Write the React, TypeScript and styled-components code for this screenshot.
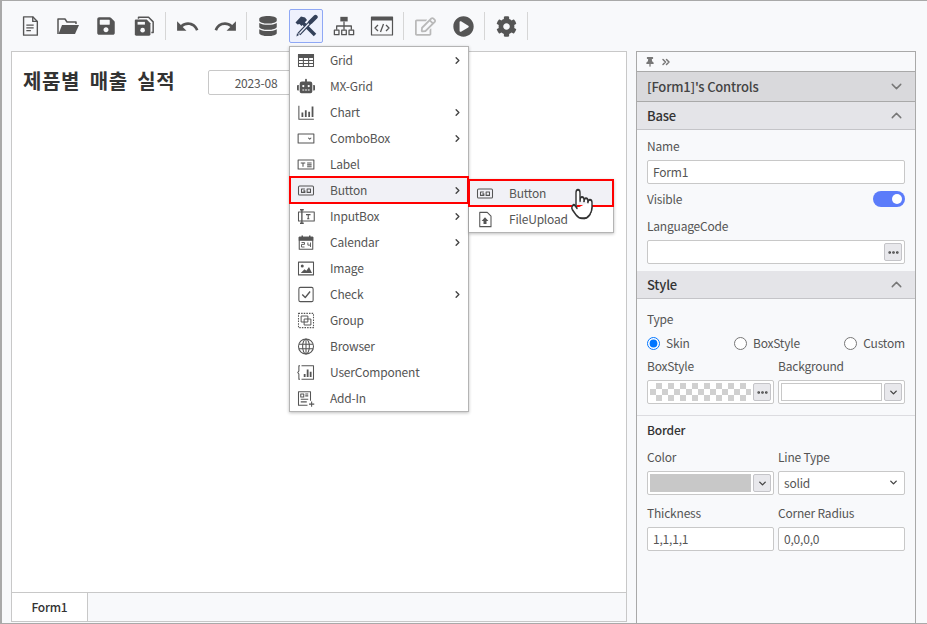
import React from 'react';
import styled, { createGlobalStyle } from 'styled-components';
import { FaCog, FaDatabase, FaPlayCircle, FaRegEdit, FaRobot, FaSave, FaThumbtack } from 'react-icons/fa';
import { MdRedo, MdUndo } from 'react-icons/md';
import { ChevronDown, ChevronRight, ChevronUp, ChevronsRight, Ellipsis, Pointer } from 'lucide-react';

const GlobalStyle = createGlobalStyle`
  html, body {
    margin: 0;
    padding: 0;
    overflow: hidden;
  }
  * {
    box-sizing: border-box;
  }
  body {
    font-family: "Noto Sans CJK KR", "Noto Sans", sans-serif;
    font-size: 12px;
    letter-spacing: -0.2px;
    color: #555;
  }
`;

const Frame = styled.div`
  width: 927px;
  height: 624px;
  display: flex;
  flex-direction: column;
  background: #f8f9fb;
  border-top: 1px solid #a9a9a9;
  border-left: 2px solid #a9a9a9;
  border-bottom: 1px solid #a9a9a9;
`;

const Toolbar = styled.div`
  height: 50px;
  flex: none;
  display: flex;
  align-items: flex-start;
  gap: 4px;
  padding: 8px 0 0 11px;
  position: relative;
  z-index: 2;
`;

const ToolButton = styled.div<{ $active?: boolean; $faded?: boolean }>`
  width: 34px;
  height: 34px;
  display: flex;
  align-items: center;
  justify-content: center;
  position: relative;
  color: ${(props) => (props.$faded ? '#b9b9b9' : '#555')};
  border: 1px solid ${(props) => (props.$active ? '#8fa8f5' : 'transparent')};
  border-radius: 2px;
  background: ${(props) => (props.$active ? '#eef1fd' : 'transparent')};
`;

const ToolSep = styled.div`
  width: 1px;
  height: 28px;
  margin-top: 3px;
  background: #d6d6d6;
`;

const Menu = styled.div`
  position: absolute;
  top: 36px;
  left: -1px;
  width: 180px;
  background: #fff;
  border: 1px solid #b4b4b4;
  box-shadow: 0 1px 3px rgba(0, 0, 0, 0.25);
`;

const MenuItem = styled.div<{ $marked?: boolean }>`
  height: 26px;
  display: flex;
  align-items: center;
  position: relative;
  padding: 0 5px 0 7px;
  background: ${(props) => (props.$marked ? '#f1f1f6' : 'transparent')};
  outline: ${(props) => (props.$marked ? '2px solid #f00' : 'none')};
  outline-offset: -1px;
  z-index: ${(props) => (props.$marked ? 1 : 0)};
`;

const MenuIcon = styled.span`
  width: 18px;
  height: 18px;
  flex: none;
  display: flex;
  align-items: center;
  justify-content: center;
  color: #555;
`;

const MenuLabel = styled.span`
  flex: 1;
  margin-left: 15px;
  line-height: 16px;
`;

const SubMenu = styled.div`
  position: absolute;
  top: 2px;
  left: 100%;
  width: 145px;
  margin-left: 1px;
  background: #fff;
  border: 1px solid #b4b4b4;
  border-left: none;
  box-shadow: 0 1px 3px rgba(0, 0, 0, 0.25);
`;

const HandCursor = styled.span`
  position: absolute;
  left: 101px;
  top: 7px;
  color: #333;
  z-index: 3;
`;

const Main = styled.div`
  flex: 1;
  min-height: 0;
  display: flex;
  gap: 9px;
  padding-left: 9px;
`;

const Stage = styled.div`
  width: 616px;
  margin-bottom: 1px;
  display: flex;
  flex-direction: column;
  border: 1px solid #c8c8c8;
`;

const Canvas = styled.div`
  flex: 1;
  background: #fff;
  padding: 18px 11px;
`;

const TitleRow = styled.div`
  display: flex;
  align-items: center;
  height: 25px;
`;

const Title = styled.h1`
  margin: 0 33px 3px 0;
  width: 152px;
  font-size: 20px;
  font-weight: 700;
  line-height: 24px;
  color: #333;
  letter-spacing: 0.6px;
  word-spacing: 4.5px;
  white-space: nowrap;
`;

const DateBox = styled.div`
  width: 96px;
  height: 25px;
  display: flex;
  align-items: center;
  justify-content: center;
  background: #fff;
  border: 1px solid #c8c8c8;
  border-radius: 2px;
`;

const TabBar = styled.div`
  height: 29px;
  flex: none;
  display: flex;
  border-top: 1px solid #c8c8c8;
`;

const Tab = styled.div`
  width: 76px;
  display: flex;
  align-items: center;
  justify-content: center;
  padding-bottom: 2px;
  background: #fff;
  border-right: 1px solid #c8c8c8;
  color: #333;
  font-weight: 500;
`;

const Panel = styled.aside`
  width: 280px;
  display: flex;
  flex-direction: column;
  border: 1px solid #a9a9a9;
  border-bottom: none;
`;

const PanelTop = styled.div`
  height: 19px;
  flex: none;
  display: flex;
  align-items: center;
  gap: 5px;
  padding-left: 8px;
  color: #777;
`;

const GroupHeader = styled.div`
  height: 31px;
  flex: none;
  display: flex;
  align-items: center;
  justify-content: space-between;
  padding: 0 10px;
  background: #d9d9dc;
  border-top: 1px solid #a9a9a9;
  border-bottom: 1px solid #a9a9a9;
  font-size: 13px;
  font-weight: 500;
  color: #444;
`;

const SectionHeader = styled.div`
  height: 28px;
  flex: none;
  display: flex;
  align-items: center;
  justify-content: space-between;
  padding: 0 10px;
  background: #e4e4e8;
  border-bottom: 1px solid #c4c4c8;
  font-size: 13px;
  font-weight: 500;
  color: #333;
`;

const SectionBody = styled.div<{ $top: number; $bottom: number }>`
  display: flex;
  flex-direction: column;
  padding: ${(props) => props.$top}px 10px ${(props) => props.$bottom}px;
`;

const FieldLabel = styled.div<{ $gap?: number }>`
  height: 17px;
  line-height: 15px;
  margin-bottom: ${(props) => props.$gap ?? 5}px;
  white-space: nowrap;
`;

const BorderTitle = styled(FieldLabel)`
  font-weight: 500;
  color: #333;
`;

const Box = styled.div`
  height: 24px;
  display: flex;
  align-items: center;
  gap: 2px;
  padding: 0 2px;
  background: #fff;
  border: 1px solid #c8c8c8;
  border-radius: 2px;
`;

const TextBox = styled(Box)`
  padding: 0 5px 2px;
`;

const SelectBox = styled(TextBox)`
  justify-content: space-between;
`;

const Grow = styled.div`
  flex: 1;
`;

const Swatch = styled.div`
  flex: 1;
  height: 18px;
  background: #c8c8c8;
`;

const Checker = styled.div`
  flex: 1;
  height: 18px;
  background: repeating-conic-gradient(#d0d0d0 0 25%, #fff 0 50%) 0 0 / 12px 12px;
`;

const ColorWell = styled.div`
  flex: 1;
  height: 18px;
  background: #fff;
  border: 1px solid #c8c8c8;
`;

const MiniButton = styled.div`
  width: 18px;
  height: 18px;
  flex: none;
  display: flex;
  align-items: center;
  justify-content: center;
  background: #e8e8ec;
  border: 1px solid #c4c4c8;
  border-radius: 2px;
  color: #444;
`;

const VisibleRow = styled.div`
  height: 24px;
  margin: 3px 0 7px;
  display: flex;
  align-items: center;
  justify-content: space-between;
`;

const VisibleText = styled.span`
  margin-bottom: 2px;
`;

const Toggle = styled.div`
  width: 32px;
  height: 16px;
  display: flex;
  align-items: center;
  justify-content: flex-end;
  padding-right: 3px;
  border-radius: 8px;
  background: #5c7cfa;
`;

const ToggleKnob = styled.div`
  width: 10px;
  height: 10px;
  border-radius: 50%;
  background: #fff;
`;

const RadioRow = styled.div`
  height: 20px;
  margin-bottom: 5px;
  display: flex;
  align-items: center;
  justify-content: space-between;
`;

const RadioLabel = styled.label`
  display: flex;
  align-items: center;
  gap: 6px;
`;

const RadioText = styled.span`
  margin-bottom: 2px;
`;

const RadioInput = styled.input`
  width: 13px;
  height: 13px;
  margin: 0;
  accent-color: #0075ff;
`;

const TwoCols = styled.div`
  display: grid;
  grid-template-columns: 127px 127px;
  column-gap: 4px;
`;

const Divider = styled.div`
  height: 1px;
  flex: none;
  background: #dcdce0;
`;

const Spacer = styled.div<{ $h: number }>`
  height: ${(props) => props.$h}px;
`;

const Svg = ({ size, children }: { size: number; children: React.ReactNode }) => (
  <svg
    width={size}
    height={size}
    viewBox="0 0 24 24"
    fill="none"
    stroke="currentColor"
    strokeWidth={1.4}
    strokeLinejoin="round"
  >
    {children}
  </svg>
);

const FileIcon = () => (
  <Svg size={22}>
    <path d="M5 2h10l5 5v15H5z" strokeWidth={1.5} />
    <path d="M15 2v5h5M8 11h8M8 14h8M8 17h5" strokeWidth={1.5} />
  </Svg>
);

const FolderIcon = () => (
  <Svg size={24}>
    <path d="M2 20V5h7l2 3h9v2" strokeWidth={1.5} />
    <path d="M2.5 20 6 11h17l-4 9z" fill="currentColor" stroke="none" />
  </Svg>
);

const SaveAllIcon = () => (
  <Svg size={22}>
    <path d="M6 4V2.5h11l5 5V19h-2" strokeWidth={1.6} />
    <path
      d="M3 5h12l4 4v12a1.5 1.5 0 0 1-1.5 1.500h-14A1.500 1.500 0 0 1 2 21V6a1 1 0 0 1 1-1z"
      fill="currentColor"
      stroke="none"
    />
    <rect x="5" y="7.500" width="8" height="3" fill="#f8f9fb" stroke="none" />
    <circle cx="10.500" cy="16.500" r="2.500" fill="#f8f9fb" stroke="none" />
  </Svg>
);

const ToolsIcon = () => (
  <svg width={24} height={24} viewBox="0 0 24 24" fill="none" color="#33405a">
    <path d="M9 9l12 12" stroke="currentColor" strokeWidth={3.6} />
    <path d="M1.500 8.500 7 2.500l4 1 2 2.500-5.500 6-2-2-2 .5z" fill="currentColor" />
    <path d="M5 20 16 8.500" stroke="currentColor" strokeWidth={3.8} />
    <path d="M5.500 19.500 15 9.500" stroke="#eef1fd" strokeWidth={1.300} />
    <path d="M16.500 8 21.500 3" stroke="currentColor" strokeWidth={4.400} strokeLinecap="round" />
    <path d="M2.500 22.500 3 19l2 2z" fill="currentColor" />
  </svg>
);

const SitemapIcon = () => (
  <Svg size={22}>
    <rect x="8" y="2" width="8" height="5" fill="currentColor" stroke="none" />
    <path d="M12 7v5M4 16v-4h16v4M12 12v4" />
    <rect x="1.500" y="16.500" width="5" height="5" />
    <rect x="9.500" y="16.500" width="5" height="5" />
    <rect x="17.500" y="16.500" width="5" height="5" />
  </Svg>
);

const CodeWindowIcon = () => (
  <Svg size={24}>
    <rect x="1.500" y="3" width="21" height="18" strokeWidth={1.200} />
    <rect x="1.500" y="3" width="21" height="3.500" fill="currentColor" stroke="none" />
    <path d="M8 11l-3 3 3 3M16 11l3 3-3 3M13.500 10l-3 8" strokeWidth={1.300} />
  </Svg>
);

const GridIcon = () => (
  <Svg size={19}>
    <rect x="2" y="4" width="20" height="16" />
    <path d="M2 4h20v4H2z" fill="currentColor" />
    <path d="M2 12h20M2 16h20M8.500 8v12M15.500 8v12" />
  </Svg>
);

const ChartIcon = () => (
  <Svg size={19}>
    <path d="M2.500 3v18h20" />
    <path d="M6 18v-6h2.400v6zM10.500 18V9h2.400v9zM15 18v-7h2.400v7zM19.500 18V4h2.400v14z" fill="currentColor" stroke="none" />
  </Svg>
);

const ComboIcon = () => (
  <Svg size={19}>
    <rect x="1.500" y="6" width="21" height="12" />
    <path d="M15 11l2 2 2-2" />
  </Svg>
);

const LabelIcon = () => (
  <Svg size={19}>
    <rect x="1.500" y="6" width="21" height="12" />
    <path d="M5 10h6M8 10v5M13.500 10h6M13.500 12.500h6M13.500 15h6" />
  </Svg>
);

const ButtonIcon = () => (
  <Svg size={19}>
    <rect x="2" y="6" width="20" height="12" rx="1.500" />
    <path d="M10.500 10H6v4.500h4.500V12.500H8.500M13.500 10H18v4.500h-4.500z" />
  </Svg>
);

const InputIcon = () => (
  <Svg size={19}>
    <path d="M4 3h5M4 21h5M6.500 3v18" strokeWidth={1.800} />
    <path d="M6.500 6H2v12h4.500M6.500 6H23v12H6.500" />
    <path d="M12 9.500h6M15 9.500V15M13.500 15h3" />
  </Svg>
);

const CalendarIcon = () => (
  <Svg size={19}>
    <path d="M3 5h18v16H3z" />
    <path d="M3 5h18v4H3z" fill="currentColor" />
    <path d="M7 2.500V6M17 2.500V6" strokeWidth={2} />
    <path d="M6 12h4v2.500H6V18h4M14.500 12v3.500H18M18 12v6" strokeWidth={1.200} />
  </Svg>
);

const ImageIcon = () => (
  <Svg size={19}>
    <rect x="2" y="3.500" width="20" height="17" />
    <circle cx="7" cy="8.500" r="2" fill="currentColor" stroke="none" />
    <path d="M5 18l5-5 2.500 2 3.500-5 4 8z" fill="currentColor" stroke="none" />
  </Svg>
);

const CheckIcon = () => (
  <Svg size={19}>
    <rect x="2.500" y="2.500" width="19" height="19" rx="2" />
    <path d="M7 12l4 4 6.500-8" strokeWidth={1.800} />
  </Svg>
);

const GroupIcon = () => (
  <Svg size={19}>
    <rect x="2" y="2.500" width="20" height="19" strokeDasharray="2 1.500" />
    <rect x="5.500" y="6" width="9" height="8" strokeWidth={1.300} />
    <rect x="9.500" y="10" width="9" height="8" strokeWidth={1.300} />
  </Svg>
);

const GlobeIcon = () => (
  <Svg size={19}>
    <circle cx="12" cy="12" r="10" />
    <ellipse cx="12" cy="12" rx="4.500" ry="10" />
    <path d="M2.500 9h19M2.500 15h19M12 2v20" />
  </Svg>
);

const UserCompIcon = () => (
  <Svg size={19}>
    <path d="M6 3h16v18H6" />
    <path d="M4 3H2.500v7L1 12l1.500 2v7H4" />
    <path d="M9 18v-4h2.400v4zM13 18V8h2.400v10zM17 18v-7h2.400v7z" fill="currentColor" stroke="none" />
  </Svg>
);

const AddInIcon = () => (
  <Svg size={19}>
    <path d="M18 15V3H2v18h12" />
    <path d="M5 6h4v4H5zM11 6h4M11 8.500h4M5 13h10M5 16.500h8M16 19.500h7M19.500 16v7" />
  </Svg>
);

const UploadIcon = () => (
  <Svg size={19}>
    <path d="M5 2.500h10l5 5v14H5z" />
    <path d="M12 9l-4.500 5H10v4h4v-4h2.500z" fill="currentColor" stroke="none" />
  </Svg>
);

const menuItems = [
  { label: 'Grid', icon: <GridIcon />, more: true },
  { label: 'MX-Grid', icon: <FaRobot size={18} /> },
  { label: 'Chart', icon: <ChartIcon />, more: true },
  { label: 'ComboBox', icon: <ComboIcon />, more: true },
  { label: 'Label', icon: <LabelIcon /> },
  { label: 'Button', icon: <ButtonIcon />, more: true, open: true },
  { label: 'InputBox', icon: <InputIcon />, more: true },
  { label: 'Calendar', icon: <CalendarIcon />, more: true },
  { label: 'Image', icon: <ImageIcon /> },
  { label: 'Check', icon: <CheckIcon />, more: true },
  { label: 'Group', icon: <GroupIcon /> },
  { label: 'Browser', icon: <GlobeIcon /> },
  { label: 'UserComponent', icon: <UserCompIcon /> },
  { label: 'Add-In', icon: <AddInIcon /> },
];

const App = () => {
  return (
    <Frame>
      <GlobalStyle />
      <Toolbar>
        <ToolButton><FileIcon /></ToolButton>
        <ToolButton><FolderIcon /></ToolButton>
        <ToolButton><FaSave size={20} /></ToolButton>
        <ToolButton><SaveAllIcon /></ToolButton>
        <ToolSep />
        <ToolButton><MdUndo size={25} /></ToolButton>
        <ToolButton><MdRedo size={25} /></ToolButton>
        <ToolSep />
        <ToolButton><FaDatabase size={20} /></ToolButton>
        <ToolButton $active>
          <ToolsIcon />
          <Menu>
            {menuItems.map((item) => (
              <MenuItem key={item.label} $marked={item.open}>
                <MenuIcon>{item.icon}</MenuIcon>
                <MenuLabel>{item.label}</MenuLabel>
                {item.more && <ChevronRight size={11} strokeWidth={3} color="#444" />}
                {item.open && (
                  <SubMenu>
                    <MenuItem $marked>
                      <MenuIcon><ButtonIcon /></MenuIcon>
                      <MenuLabel>Button</MenuLabel>
                      <HandCursor>
                        <Pointer width={24} height={34} preserveAspectRatio="none" strokeWidth={1.4} fill="#fff" />
                      </HandCursor>
                    </MenuItem>
                    <MenuItem>
                      <MenuIcon><UploadIcon /></MenuIcon>
                      <MenuLabel>FileUpload</MenuLabel>
                    </MenuItem>
                  </SubMenu>
                )}
              </MenuItem>
            ))}
          </Menu>
        </ToolButton>
        <ToolButton><SitemapIcon /></ToolButton>
        <ToolButton><CodeWindowIcon /></ToolButton>
        <ToolSep />
        <ToolButton $faded><FaRegEdit size={21} /></ToolButton>
        <ToolButton><FaPlayCircle size={21} /></ToolButton>
        <ToolSep />
        <ToolButton><FaCog size={21} /></ToolButton>
        <ToolSep />
      </Toolbar>
      <Main>
        <Stage>
          <Canvas>
            <TitleRow>
              <Title>제품별 매출 실적</Title>
              <DateBox>2023-08</DateBox>
            </TitleRow>
          </Canvas>
          <TabBar>
            <Tab>Form1</Tab>
          </TabBar>
        </Stage>
        <Panel>
          <PanelTop>
            <FaThumbtack size={10} />
            <ChevronsRight size={12} strokeWidth={3} />
          </PanelTop>
          <GroupHeader>
            [Form1]'s Controls
            <ChevronDown size={17} strokeWidth={2} color="#777" />
          </GroupHeader>
          <SectionHeader>
            Base
            <ChevronUp size={17} strokeWidth={2} color="#777" />
          </SectionHeader>
          <SectionBody $top={8} $bottom={7}>
            <FieldLabel>Name</FieldLabel>
            <TextBox>Form1</TextBox>
            <VisibleRow>
              <VisibleText>Visible</VisibleText>
              <Toggle><ToggleKnob /></Toggle>
            </VisibleRow>
            <FieldLabel>LanguageCode</FieldLabel>
            <Box>
              <Grow />
              <MiniButton><Ellipsis size={13} strokeWidth={3} /></MiniButton>
            </Box>
          </SectionBody>
          <SectionHeader>
            Style
            <ChevronUp size={17} strokeWidth={2} color="#777" />
          </SectionHeader>
          <SectionBody $top={12} $bottom={11}>
            <FieldLabel>Type</FieldLabel>
            <RadioRow>
              <RadioLabel><RadioInput type="radio" name="type" defaultChecked /><RadioText>Skin</RadioText></RadioLabel>
              <RadioLabel><RadioInput type="radio" name="type" /><RadioText>BoxStyle</RadioText></RadioLabel>
              <RadioLabel><RadioInput type="radio" name="type" /><RadioText>Custom</RadioText></RadioLabel>
            </RadioRow>
            <TwoCols>
              <FieldLabel>BoxStyle</FieldLabel>
              <FieldLabel>Background</FieldLabel>
              <Box>
                <Checker />
                <MiniButton><Ellipsis size={13} strokeWidth={3} /></MiniButton>
              </Box>
              <Box>
                <ColorWell />
                <MiniButton><ChevronDown size={11} strokeWidth={3} /></MiniButton>
              </Box>
            </TwoCols>
          </SectionBody>
          <Divider />
          <SectionBody $top={6} $bottom={0}>
            <BorderTitle $gap={10}>Border</BorderTitle>
            <TwoCols>
              <FieldLabel>Color</FieldLabel>
              <FieldLabel>Line Type</FieldLabel>
              <Box>
                <Swatch />
                <MiniButton><ChevronDown size={11} strokeWidth={3} /></MiniButton>
              </Box>
              <SelectBox>
                solid
                <ChevronDown size={11} strokeWidth={3} color="#444" />
              </SelectBox>
            </TwoCols>
            <Spacer $h={10} />
            <TwoCols>
              <FieldLabel>Thickness</FieldLabel>
              <FieldLabel>Corner Radius</FieldLabel>
              <TextBox>1,1,1,1</TextBox>
              <TextBox>0,0,0,0</TextBox>
            </TwoCols>
          </SectionBody>
        </Panel>
      </Main>
    </Frame>
  );
};

export default App;
